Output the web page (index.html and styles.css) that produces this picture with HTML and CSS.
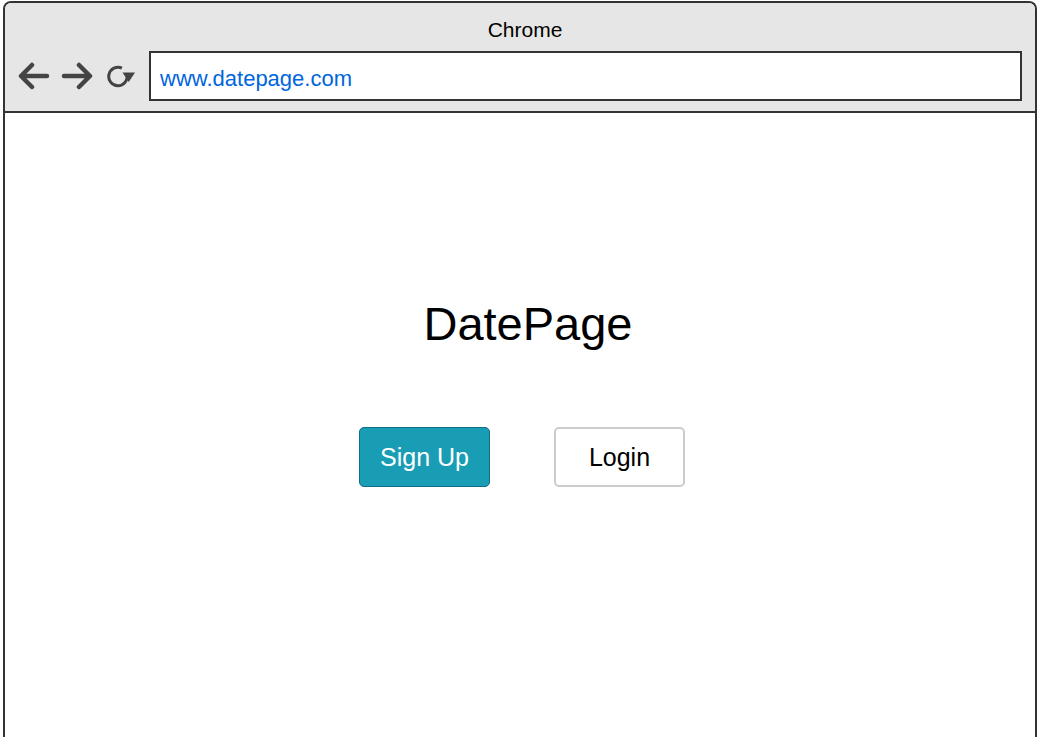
FILE: index.html
```html
<!DOCTYPE html>
<html>
<head>
<meta charset="utf-8">
<title>DatePage</title>
<link rel="stylesheet" href="styles.css">
</head>
<body>
<div class="window">
  <div class="chrome">
    <div class="chrome-title">Chrome</div>
    <div class="toolbar">
      <div class="nav">
        <svg class="icon" width="32" height="30" viewBox="0 0 32 30"><path d="M29 15H4M14 4L3 15l11 11" fill="none" stroke="#444" stroke-width="4.5" stroke-linecap="round" stroke-linejoin="round"/></svg>
        <svg class="icon" width="32" height="30" viewBox="0 0 32 30"><path d="M3 15h25M18 4l11 11-11 11" fill="none" stroke="#444" stroke-width="4.5" stroke-linecap="round" stroke-linejoin="round"/></svg>
        <svg class="icon reload" width="30" height="24" viewBox="0 0 30 24"><path d="M14.9 3.1A9.25 9.25 0 1 0 20.1 9.9" fill="none" stroke="#444" stroke-width="3"/><path d="M15.5 7.5h12.5l-6.25 9.5z" fill="#444"/></svg>
      </div>
      <div class="address">www.datepage.com</div>
    </div>
  </div>
  <div class="page">
    <h1 class="brand">DatePage</h1>
    <div class="actions">
      <button class="btn btn-primary">Sign Up</button>
      <button class="btn btn-default">Login</button>
    </div>
  </div>
</div>
</body>
</html>
```
FILE: styles.css
```css
html, body {
  margin: 0;
  padding: 0;
  background: #ffffff;
  overflow: hidden;
}
body {
  font-family: "Liberation Sans", Arial, Helvetica, sans-serif;
  color: #000;
}
.window {
  margin: 1px 0 0 3px;
  width: 1030px;
  height: 760px;
  border: 2px solid #333;
  border-bottom: none;
  border-radius: 8px 8px 0 0;
  background: #fff;
  overflow: hidden;
}
.chrome {
  background: #e6e6e6;
  border-bottom: 2px solid #333;
  height: 108px;
  display: flex;
  flex-direction: column;
}
.chrome-title {
  text-align: center;
  font-size: 21px;
  line-height: 24px;
  padding-top: 15px;
  padding-left: 10px;
}
.toolbar {
  display: flex;
  align-items: center;
  margin-top: 9px;
  padding-left: 13px;
}
.nav {
  display: flex;
  align-items: center;
  gap: 11px;
  width: 131px;
}
.icon {
  display: block;
}
.reload {
  margin-left: 3px;
  margin-top: 2px;
}
.address {
  flex: 0 0 auto;
  width: 860px;
  height: 46px;
  border: 2px solid #333;
  background: #fff;
  color: #0066dd;
  font-size: 22px;
  line-height: 52px;
  padding-left: 9px;
  box-sizing: content-box;
}
.page {
  display: flex;
  flex-direction: column;
  align-items: center;
  padding-top: 184px;
}
.brand {
  margin: 0;
  font-weight: normal;
  font-size: 47px;
  line-height: 54px;
  padding-left: 16px;
}
.actions {
  display: flex;
  gap: 64px;
  margin-top: 76px;
  padding-left: 4px;
}
.btn {
  width: 131px;
  height: 60px;
  font-family: "Liberation Sans", Arial, Helvetica, sans-serif;
  font-size: 25px;
  border-radius: 5px;
  box-sizing: border-box;
  padding: 0;
  cursor: pointer;
}
.btn-primary {
  background: #189db5;
  border: 1.5px solid #0f6f84;
  color: #fff;
}
.btn-default {
  background: #fff;
  border: 2px solid #cccccc;
  color: #000;
}
```
